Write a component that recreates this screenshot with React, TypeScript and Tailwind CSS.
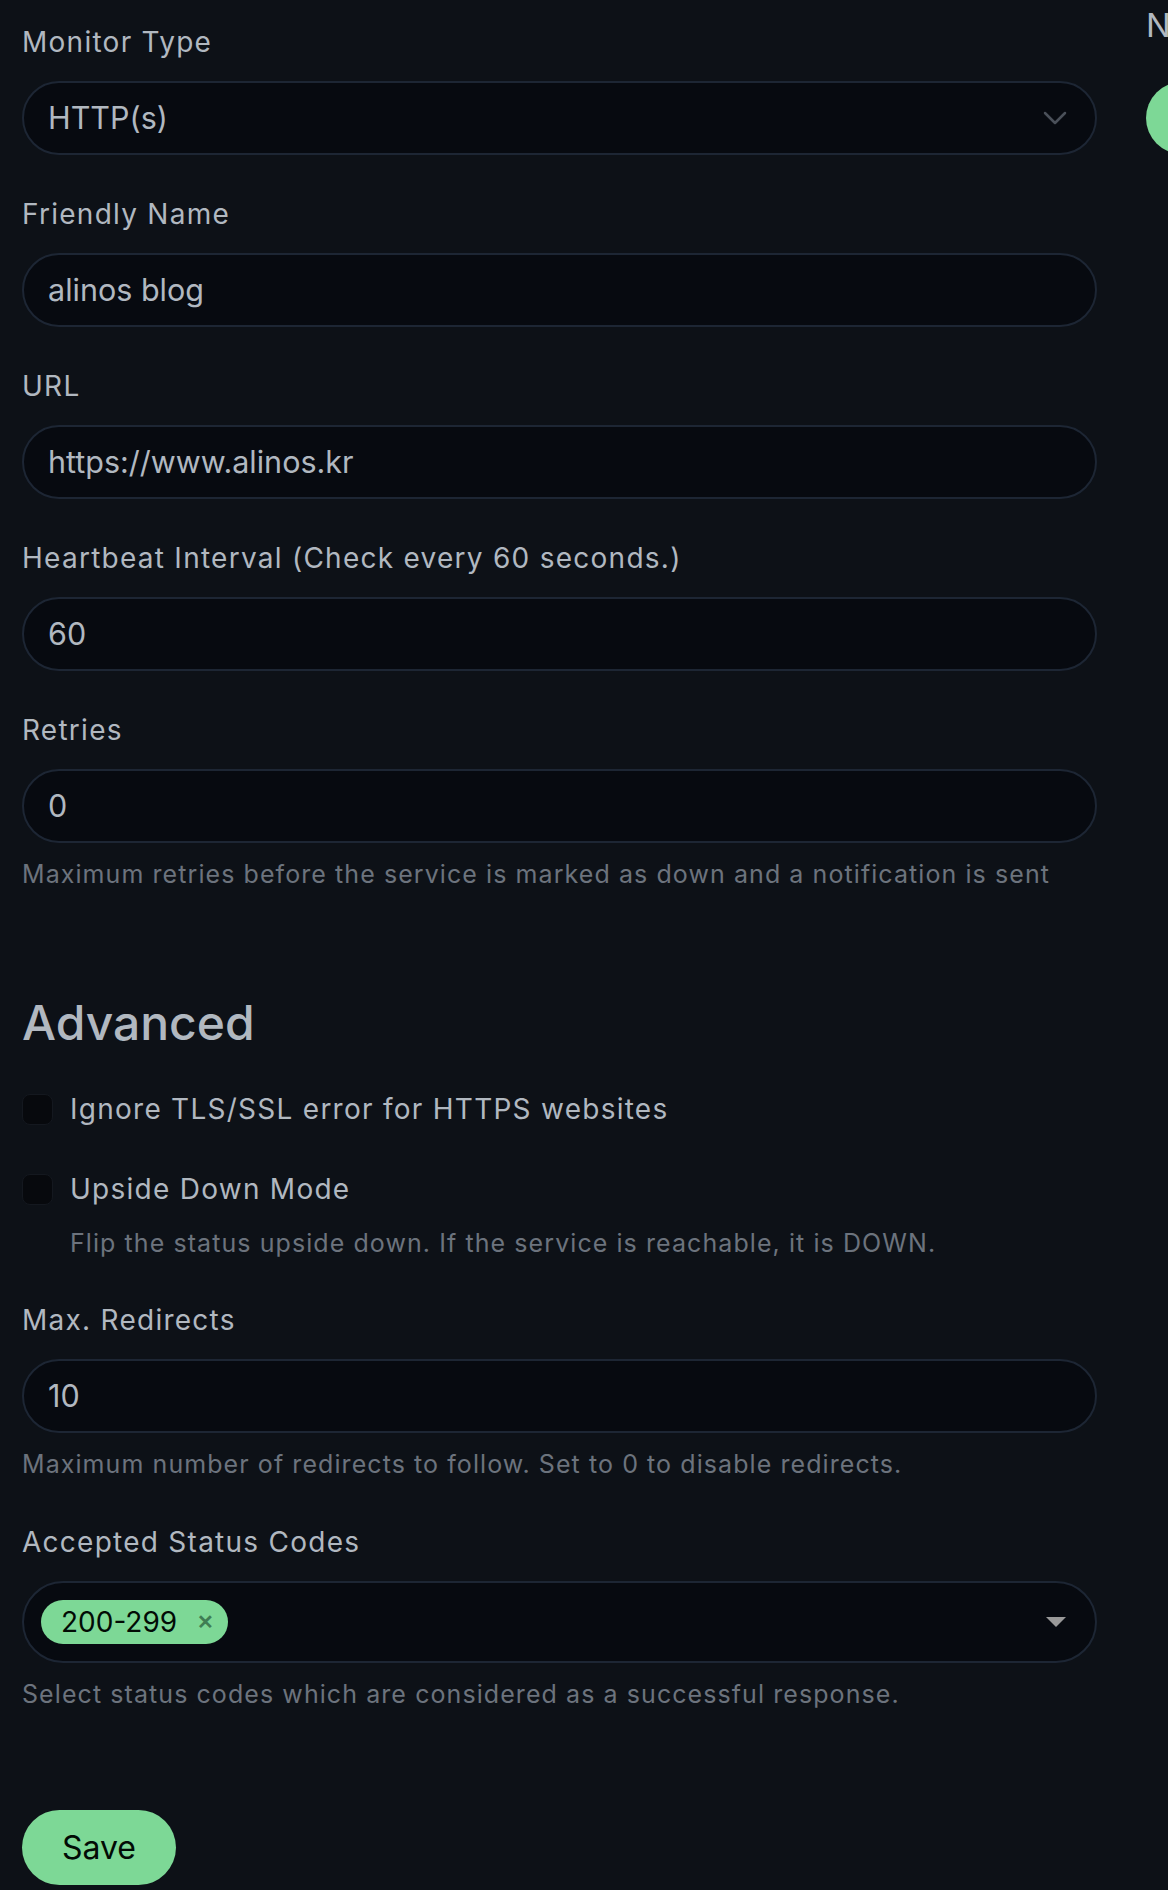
import React from "react";

const font = { fontFamily: "Inter, 'Noto Sans', sans-serif" };

function Label({ children }: { children: React.ReactNode }) {
  return <div className="text-[28px] leading-[42px] tracking-[0.045em] text-[#b1b8c0]">{children}</div>;
}

function TextInput({ value, chevron }: { value: string; chevron?: boolean }) {
  return (
    <div className="mt-[18px] flex h-[74px] items-center justify-between rounded-full border-2 border-[#1d2634] bg-[#070a10] pl-[24px] pr-[28px]">
      <span className="text-[30.5px] leading-none text-[#b1b8c0]">{value}</span>
      {chevron && (
        <svg width="24" height="14" viewBox="0 0 24 14" fill="none">
          <polyline points="2,2 12,12 22,2" stroke="#4a5059" strokeWidth="2.5" strokeLinecap="round" strokeLinejoin="round" />
        </svg>
      )}
    </div>
  );
}

function Help({ children, className = "" }: { children: React.ReactNode; className?: string }) {
  return <div className={"text-[25px] leading-[37px] tracking-[0.043em] text-[#6c737d] " + className}>{children}</div>;
}

function Checkbox({ label }: { label: string }) {
  return (
    <div className="flex items-center gap-[17px]">
      <div className="h-[31px] w-[31px] shrink-0 rounded-[8px] border border-[#14181f] bg-[#07090d]" />
      <span className="text-[28px] leading-[42px] tracking-[0.045em] text-[#b1b8c0]">{label}</span>
    </div>
  );
}

export default function App() {
  return (
    <div className="min-h-[1890px] w-[1168px] overflow-hidden bg-[#0d1117]" style={font}>
      <div className="flex pl-[22px]">
        <div className="w-[1075px] shrink-0 pt-[21px]">
          <div>
            <Label>Monitor Type</Label>
            <TextInput value="HTTP(s)" chevron />
          </div>
          <div className="mt-[38px]">
            <Label>Friendly Name</Label>
            <TextInput value="alinos blog" />
          </div>
          <div className="mt-[38px]">
            <Label>URL</Label>
            <TextInput value="https://www.alinos.kr" />
          </div>
          <div className="mt-[38px]">
            <Label>Heartbeat Interval (Check every 60 seconds.)</Label>
            <TextInput value="60" />
          </div>
          <div className="mt-[38px]">
            <Label>Retries</Label>
            <TextInput value="0" />
            <Help className="mt-[13px]">
              Maximum retries before the service is marked as down and a notification is sent
            </Help>
          </div>

          <h2 className="mt-[100px] text-[48px] font-medium leading-[60px] text-[#b1b8c0]">Advanced</h2>

          <div className="mt-[35px]">
            <Checkbox label="Ignore TLS/SSL error for HTTPS websites" />
          </div>
          <div className="mt-[38px]">
            <Checkbox label="Upside Down Mode" />
            <Help className="mt-[15px] pl-[48px]">
              Flip the status upside down. If the service is reachable, it is DOWN.
            </Help>
          </div>

          <div className="mt-[37px]">
            <Label>Max. Redirects</Label>
            <TextInput value="10" />
            <Help className="mt-[13px]">Maximum number of redirects to follow. Set to 0 to disable redirects.</Help>
          </div>

          <div className="mt-[38px]">
            <Label>Accepted Status Codes</Label>
            <div className="mt-[18px] flex h-[82px] items-center justify-between rounded-full border-2 border-[#1d2634] bg-[#070a10] pl-[17px] pr-[29px]">
              <div className="flex h-[44px] items-center rounded-full bg-[#7dd896] pl-[20px] pr-[14px]">
                <span className="text-[28px] leading-none text-[#020b05]">200-299</span>
                <span className="ml-[20px] text-[20px] font-bold leading-none text-[#3f7d54]">✕</span>
              </div>
              <svg width="20" height="10" viewBox="0 0 20 10">
                <polygon points="0,0 20,0 10,10" fill="#999999" />
              </svg>
            </div>
            <Help className="mt-[13px]">Select status codes which are considered as a successful response.</Help>
          </div>

          <button className="mt-[97px] flex h-[75px] w-[154px] items-center justify-center rounded-full bg-[#7dd896] text-[32px] leading-none text-[#020b05]">
            Save
          </button>
        </div>

        <div className="ml-[49px] w-[300px] shrink-0">
          <div className="pt-[5px] text-[33px] leading-[40px] text-[#b1b8c0]">Notifications</div>
          <div className="mt-[37px] h-[72px] w-[160px] rounded-full bg-[#7dd896]" />
        </div>
      </div>
    </div>
  );
}
